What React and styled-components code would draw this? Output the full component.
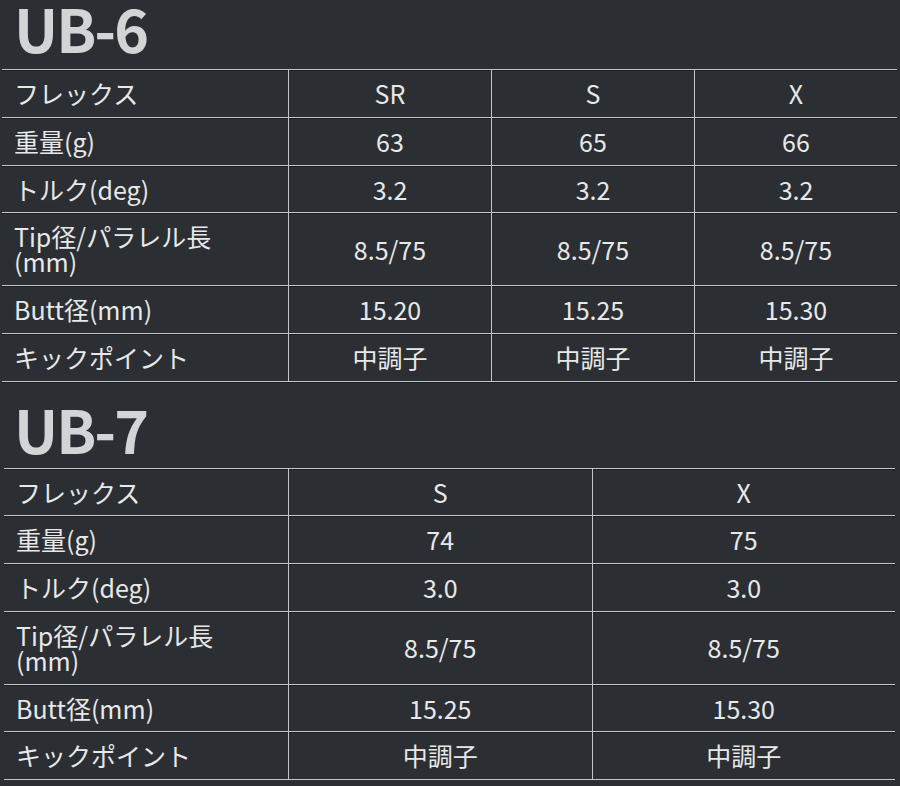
import styled, { createGlobalStyle } from "styled-components";

const GlobalStyle = createGlobalStyle`
  body {
    margin: 0;
    background: #2b2f33;
    font-family: "Noto Sans CJK JP", "Noto Sans", sans-serif;
  }
`;

const specs = [
  {
    name: "UB-6",
    inset: 2,
    right: 3,
    labelWidth: 286,
    flex: ["SR", "S", "X"],
    rows: [
      ["重量(g)", ["63", "65", "66"]],
      ["トルク(deg)", ["3.2", "3.2", "3.2"]],
      ["Tip径/パラレル長\n(mm)", ["8.5/75", "8.5/75", "8.5/75"]],
      ["Butt径(mm)", ["15.20", "15.25", "15.30"]],
      ["キックポイント", ["中調子", "中調子", "中調子"]],
    ],
  },
  {
    name: "UB-7",
    inset: 4,
    right: 5,
    labelWidth: 284,
    flex: ["S", "X"],
    rows: [
      ["重量(g)", ["74", "75"]],
      ["トルク(deg)", ["3.0", "3.0"]],
      ["Tip径/パラレル長\n(mm)", ["8.5/75", "8.5/75"]],
      ["Butt径(mm)", ["15.25", "15.30"]],
      ["キックポイント", ["中調子", "中調子"]],
    ],
  },
];

const App = () => {
  return (
    <Page>
      <GlobalStyle />
      {specs.map((spec, i) => (
        <Section key={spec.name}>
          <Title first={i === 0}>{spec.name}</Title>
          <Table inset={spec.inset} right={spec.right}>
            <Row cols={spec.flex.length} labelWidth={spec.labelWidth}>
              <Label>フレックス</Label>
              {spec.flex.map((f, j) => (
                <Value key={j}>{f}</Value>
              ))}
            </Row>
            {spec.rows.map(([label, values]) => (
              <Row key={label} cols={spec.flex.length} labelWidth={spec.labelWidth}>
                <Label>{label}</Label>
                {values.map((v, j) => (
                  <Value key={j}>{v}</Value>
                ))}
              </Row>
            ))}
          </Table>
        </Section>
      ))}
    </Page>
  );
};

export default App;

const Page = styled.div`
  width: 900px;
  display: flex;
  flex-direction: column;
`;

const Section = styled.section`
  display: flex;
  flex-direction: column;
`;

const Title = styled.h2`
  margin: 0;
  padding: ${(p) => (p.first ? "0" : "19px")} 14px 0;
  height: ${(p) => (p.first ? "69px" : "67px")};
  box-sizing: content-box;
  font-size: 59px;
  font-weight: 700;
  letter-spacing: -2px;
  line-height: 56px;
  color: #d3d4d6;
`;

const Table = styled.div`
  margin: 0 ${(p) => p.right}px 0 ${(p) => p.inset}px;
  border-bottom: 1px solid #c3c5c7;
  box-shadow: 0 1px 0 #1b1e21;
`;

const Row = styled.div`
  display: grid;
  grid-template-columns: ${(p) => p.labelWidth}px repeat(${(p) => p.cols}, 1fr);
  border-top: 1px solid #c3c5c7;
  box-shadow: inset 0 1px 0 #1b1e21;
`;

const Cell = styled.div`
  padding: 11px 12px;
  font-size: 25px;
  line-height: 24.8px;
  color: #e8e8e8;
  display: flex;
  align-items: center;
  white-space: pre-line;
`;

const Label = styled(Cell)`
  padding-left: 12px;
`;

const Value = styled(Cell)`
  justify-content: center;
  border-left: 1px solid #c3c5c7;
`;
